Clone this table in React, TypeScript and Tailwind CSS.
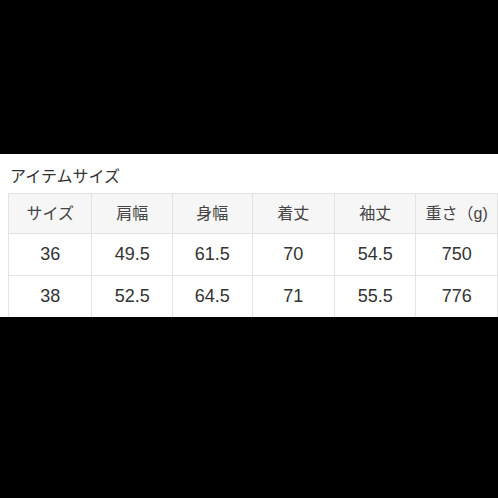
import React from 'react';

const headers = ['サイズ', '肩幅', '身幅', '着丈', '袖丈', '重さ（g)'];
const rows = [
  ['36', '49.5', '61.5', '70', '54.5', '750'],
  ['38', '52.5', '64.5', '71', '55.5', '776'],
];
const widths = ['w-[84px]', 'w-[81px]', 'w-[80px]', 'w-[83px]', 'w-[82px]', 'w-[82px]'];

const App: React.FC = () => {
  return (
    <div
      className="w-[498px] h-[498px] bg-black overflow-hidden pt-[154px]"
      style={{ fontFamily: '"Liberation Sans", "Noto Sans CJK JP", sans-serif' }}
    >
      <div className="bg-white h-[163px] overflow-hidden">
        <div className="pl-[10px] pt-[13px] h-[39px] text-[16px] leading-[20px] text-[#333]">
          アイテムサイズ
        </div>
        <table className="ml-[8px] border-collapse table-fixed text-[#333]">
          <thead>
            <tr className="bg-[#f6f6f6] h-[40px]">
              {headers.map((h, i) => (
                <th key={h} className={`${widths[i]} border border-[#e3e3e3] font-normal text-center p-0 text-[16px] text-[#444]`}>
                  {h}
                </th>
              ))}
            </tr>
          </thead>
          <tbody>
            {rows.map((r) => (
              <tr key={r[0]} className="h-[42px]">
                {r.map((c, i) => (
                  <td key={i} className={`${widths[i]} border border-[#e3e3e3] text-center p-0 text-[18px]`}>
                    {c}
                  </td>
                ))}
              </tr>
            ))}
          </tbody>
        </table>
      </div>
    </div>
  );
};

export default App;
